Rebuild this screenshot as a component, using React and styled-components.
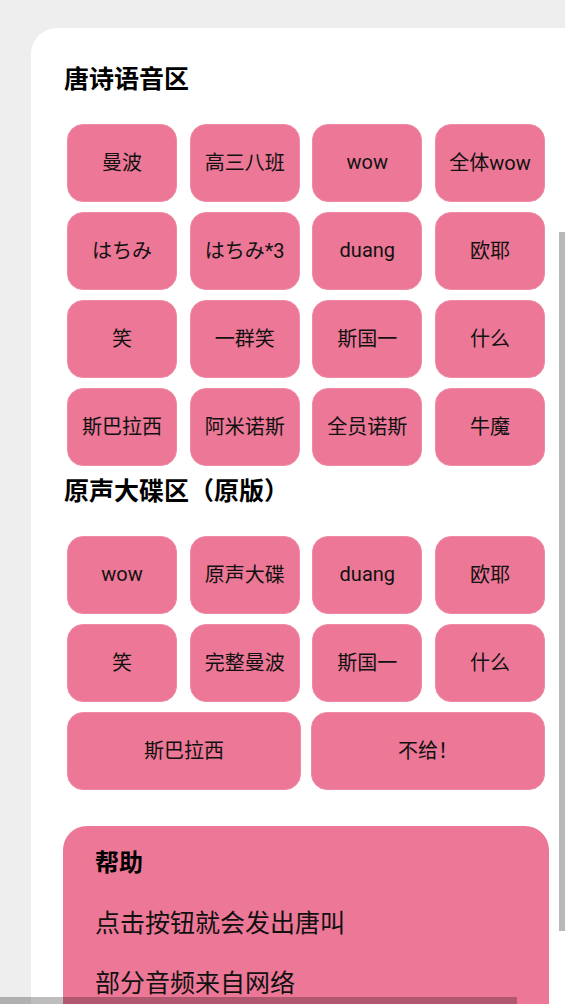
import React from "react";
import styled, { createGlobalStyle } from "styled-components";

const Global = createGlobalStyle`
  html, body {
    margin: 0;
    padding: 0;
    overflow: hidden;
    background: #eeeeee;
    font-family: Roboto, "Noto Sans CJK SC", sans-serif;
  }
  #root { width: 565px; height: 1004px; overflow: hidden; }
`;

const Page = styled.div`
  padding: 28px 0 0 31px;
  width: 565px;
  height: 1004px;
  box-sizing: border-box;
  overflow: hidden;
`;

const Card = styled.main`
  width: 590px;
  min-height: 1100px;
  background: #ffffff;
  border-radius: 26px 26px 0 0;
  padding: 33px 0 0 33px;
  box-sizing: border-box;
  display: flex;
  flex-direction: column;
`;

const SectionTitle = styled.h2`
  margin: ${(p) => p.$top || 0}px 0 0 0;
  font-family: "Noto Sans CJK SC", sans-serif;
  font-size: 25px;
  line-height: 32px;
  font-weight: 700;
  color: #000;
`;

const Grid = styled.div`
  margin: 31px 0 0 3px;
  display: grid;
  grid-template-columns: repeat(${(p) => p.$cols}, ${(p) => p.$w}px);
  grid-auto-rows: 78px;
  column-gap: ${(p) => p.$gap}px;
  row-gap: 10px;
`;

const WideRow = styled.div`
  margin: 10px 0 0 3px;
  display: grid;
  grid-template-columns: repeat(2, 234px);
  grid-auto-rows: 78px;
  column-gap: 10px;
`;

const Btn = styled.button`
  border: 1px solid #f08aa4;
  background: #ec7796;
  border-radius: 16px;
  padding: 0 0 3px 0;
  font-family: Roboto, "Noto Sans CJK SC", sans-serif;
  font-size: 20px;
  color: #111;
  display: flex;
  align-items: center;
  justify-content: center;
  white-space: nowrap;
  cursor: pointer;
`;

const Help = styled.section`
  margin: 36px 0 0 -1px;
  width: 486px;
  background: #ec7796;
  border-radius: 24px 24px 0 0;
  padding: 19px 0 0 32px;
  box-sizing: border-box;
  min-height: 200px;
`;

const HelpTitle = styled.h3`
  margin: 0;
  font-family: "Noto Sans CJK SC", sans-serif;
  font-size: 24px;
  line-height: 32px;
  font-weight: 700;
  color: #000;
`;

const HelpText = styled.p`
  margin: 28px 0 0 0;
  font-family: "Noto Sans CJK SC", sans-serif;
  font-size: 25px;
  line-height: 32px;
  color: #111;
`;

const VScroll = styled.div`
  position: fixed;
  left: 559px;
  top: 232px;
  width: 6px;
  height: 699px;
  background: rgba(0, 0, 0, 0.28);
`;

const HScroll = styled.div`
  position: fixed;
  left: 0;
  top: 997px;
  width: 517px;
  height: 7px;
  background: rgba(0, 0, 0, 0.26);
`;

const tang = [
  "曼波", "高三八班", "wow", "全体wow",
  "はちみ", "はちみ*3", "duang", "欧耶",
  "笑", "一群笑", "斯国一", "什么",
  "斯巴拉西", "阿米诺斯", "全员诺斯", "牛魔",
];

const ost = ["wow", "原声大碟", "duang", "欧耶", "笑", "完整曼波", "斯国一", "什么"];
const ostWide = ["斯巴拉西", "不给！"];

export default function App() {
  return (
    <>
      <Global />
      <Page>
        <Card>
          <SectionTitle>唐诗语音区</SectionTitle>
          <Grid $cols={4} $w={110} $gap={12.67}>
            {tang.map((t) => (
              <Btn key={t}>{t}</Btn>
            ))}
          </Grid>
          <SectionTitle $top={7}>原声大碟区（原版）</SectionTitle>
          <Grid $cols={4} $w={110} $gap={12.67}>
            {ost.map((t) => (
              <Btn key={t}>{t}</Btn>
            ))}
          </Grid>
          <WideRow>
            {ostWide.map((t) => (
              <Btn key={t}>{t}</Btn>
            ))}
          </WideRow>
          <Help>
            <HelpTitle>帮助</HelpTitle>
            <HelpText>点击按钮就会发出唐叫</HelpText>
            <HelpText>部分音频来自网络</HelpText>
          </Help>
        </Card>
      </Page>
      <VScroll />
      <HScroll />
    </>
  );
}
